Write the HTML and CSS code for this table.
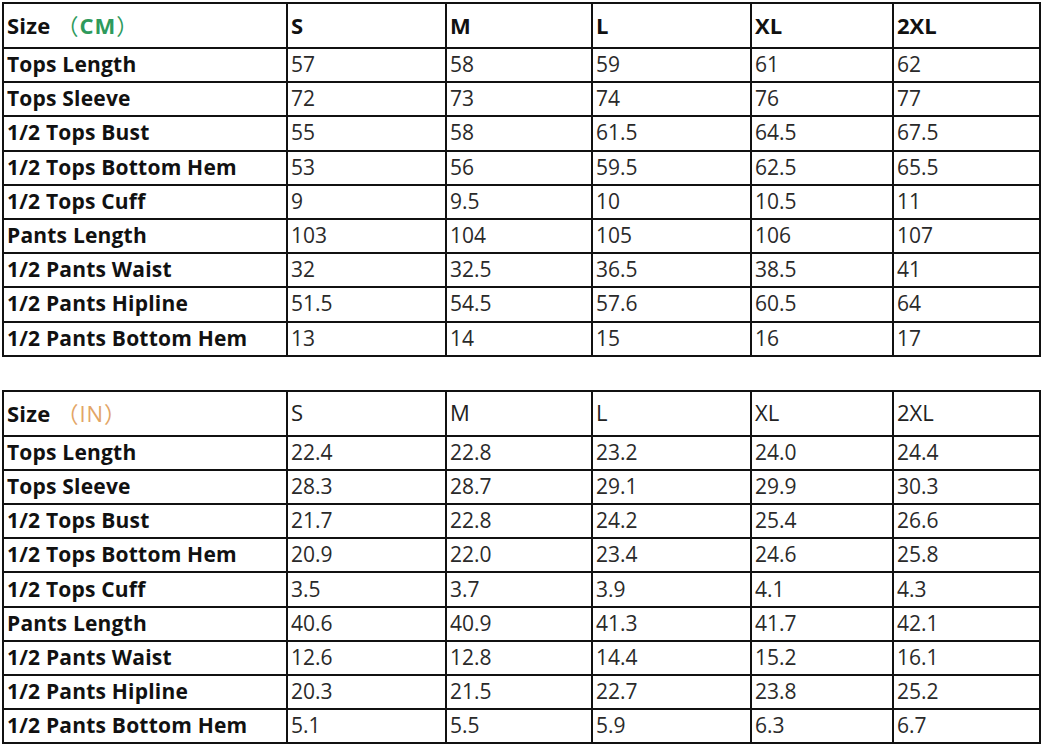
FILE: index.html
```html
<!DOCTYPE html>
<html>
<head>
<meta charset="utf-8">
<link rel="stylesheet" href="styles.css">
</head>
<body>
<div class="page">
<table class="sizes bold-head">
<colgroup><col class="c0"><col class="c1"><col class="c2"><col class="c3"><col class="c4"><col class="c5"></colgroup>
<tr class="head"><th class="label">Size<span class="unit cm"><span class="paren">（</span>CM<span class="paren">）</span></span></th><th>S</th><th>M</th><th>L</th><th>XL</th><th>2XL</th></tr>
<tr><th class="label">Tops Length</th><td>57</td><td>58</td><td>59</td><td>61</td><td>62</td></tr>
<tr><th class="label">Tops Sleeve</th><td>72</td><td>73</td><td>74</td><td>76</td><td>77</td></tr>
<tr><th class="label">1/2 Tops Bust</th><td>55</td><td>58</td><td>61.5</td><td>64.5</td><td>67.5</td></tr>
<tr><th class="label">1/2 Tops Bottom Hem</th><td>53</td><td>56</td><td>59.5</td><td>62.5</td><td>65.5</td></tr>
<tr><th class="label">1/2 Tops Cuff</th><td>9</td><td>9.5</td><td>10</td><td>10.5</td><td>11</td></tr>
<tr><th class="label">Pants Length</th><td>103</td><td>104</td><td>105</td><td>106</td><td>107</td></tr>
<tr><th class="label">1/2 Pants Waist</th><td>32</td><td>32.5</td><td>36.5</td><td>38.5</td><td>41</td></tr>
<tr><th class="label">1/2 Pants Hipline</th><td>51.5</td><td>54.5</td><td>57.6</td><td>60.5</td><td>64</td></tr>
<tr><th class="label">1/2 Pants Bottom Hem</th><td>13</td><td>14</td><td>15</td><td>16</td><td>17</td></tr>
</table>

<table class="sizes light-head">
<colgroup><col class="c0"><col class="c1"><col class="c2"><col class="c3"><col class="c4"><col class="c5"></colgroup>
<tr class="head"><th class="label">Size<span class="unit in"><span class="paren">（</span>IN<span class="paren">）</span></span></th><th>S</th><th>M</th><th>L</th><th>XL</th><th>2XL</th></tr>
<tr><th class="label">Tops Length</th><td>22.4</td><td>22.8</td><td>23.2</td><td>24.0</td><td>24.4</td></tr>
<tr><th class="label">Tops Sleeve</th><td>28.3</td><td>28.7</td><td>29.1</td><td>29.9</td><td>30.3</td></tr>
<tr><th class="label">1/2 Tops Bust</th><td>21.7</td><td>22.8</td><td>24.2</td><td>25.4</td><td>26.6</td></tr>
<tr><th class="label">1/2 Tops Bottom Hem</th><td>20.9</td><td>22.0</td><td>23.4</td><td>24.6</td><td>25.8</td></tr>
<tr><th class="label">1/2 Tops Cuff</th><td>3.5</td><td>3.7</td><td>3.9</td><td>4.1</td><td>4.3</td></tr>
<tr><th class="label">Pants Length</th><td>40.6</td><td>40.9</td><td>41.3</td><td>41.7</td><td>42.1</td></tr>
<tr><th class="label">1/2 Pants Waist</th><td>12.6</td><td>12.8</td><td>14.4</td><td>15.2</td><td>16.1</td></tr>
<tr><th class="label">1/2 Pants Hipline</th><td>20.3</td><td>21.5</td><td>22.7</td><td>23.8</td><td>25.2</td></tr>
<tr><th class="label">1/2 Pants Bottom Hem</th><td>5.1</td><td>5.5</td><td>5.9</td><td>6.3</td><td>6.7</td></tr>
</table>
</div>
</body>
</html>
```
FILE: styles.css
```css
html, body {
  margin: 0;
  padding: 0;
  background: #ffffff;
}
.page {
  padding: 2px 0 0 2px;
  display: flex;
  flex-direction: column;
  gap: 33px;
  font-family: "Open Sans", "Liberation Sans", sans-serif;
  color: #1e1e1e;
}
.sizes {
  border-collapse: collapse;
  table-layout: fixed;
  width: 1039px;
}
.c0 { width: 284px; }
.c1 { width: 159px; }
.c2 { width: 146px; }
.c3 { width: 159px; }
.c4 { width: 142px; }
.c5 { width: 147px; }
.sizes tr { height: 34.2px; }
.sizes tr.head { height: 45px; }
.sizes th, .sizes td {
  border: 2px solid #111111;
  padding: 0 0 2px 3px;
  text-align: left;
  font-size: 21px;
  line-height: 22px;
  white-space: nowrap;
  overflow: hidden;
}
.sizes td {
  font-weight: 400;
  color: #2a2a2a;
}
.sizes th.label {
  font-weight: 700;
  color: #111111;
  letter-spacing: 0.2px;
}
.sizes tr.head th {
  padding-bottom: 2px;
  font-size: 22px;
}
.bold-head tr.head th { font-weight: 700; color: #111; }
.light-head tr.head th { font-weight: 400; color: #222; }
.light-head tr.head th.label { font-weight: 700; color: #111; }
.unit { font-weight: 700; margin-left: 6px; letter-spacing: 1px; }
.paren {
  font-family: "Noto Sans CJK SC", sans-serif;
  font-weight: 400;
}
.unit.cm { color: #2e9a5c; }
.light-head .unit.in { color: #e3a566; font-weight: 400; }
```
